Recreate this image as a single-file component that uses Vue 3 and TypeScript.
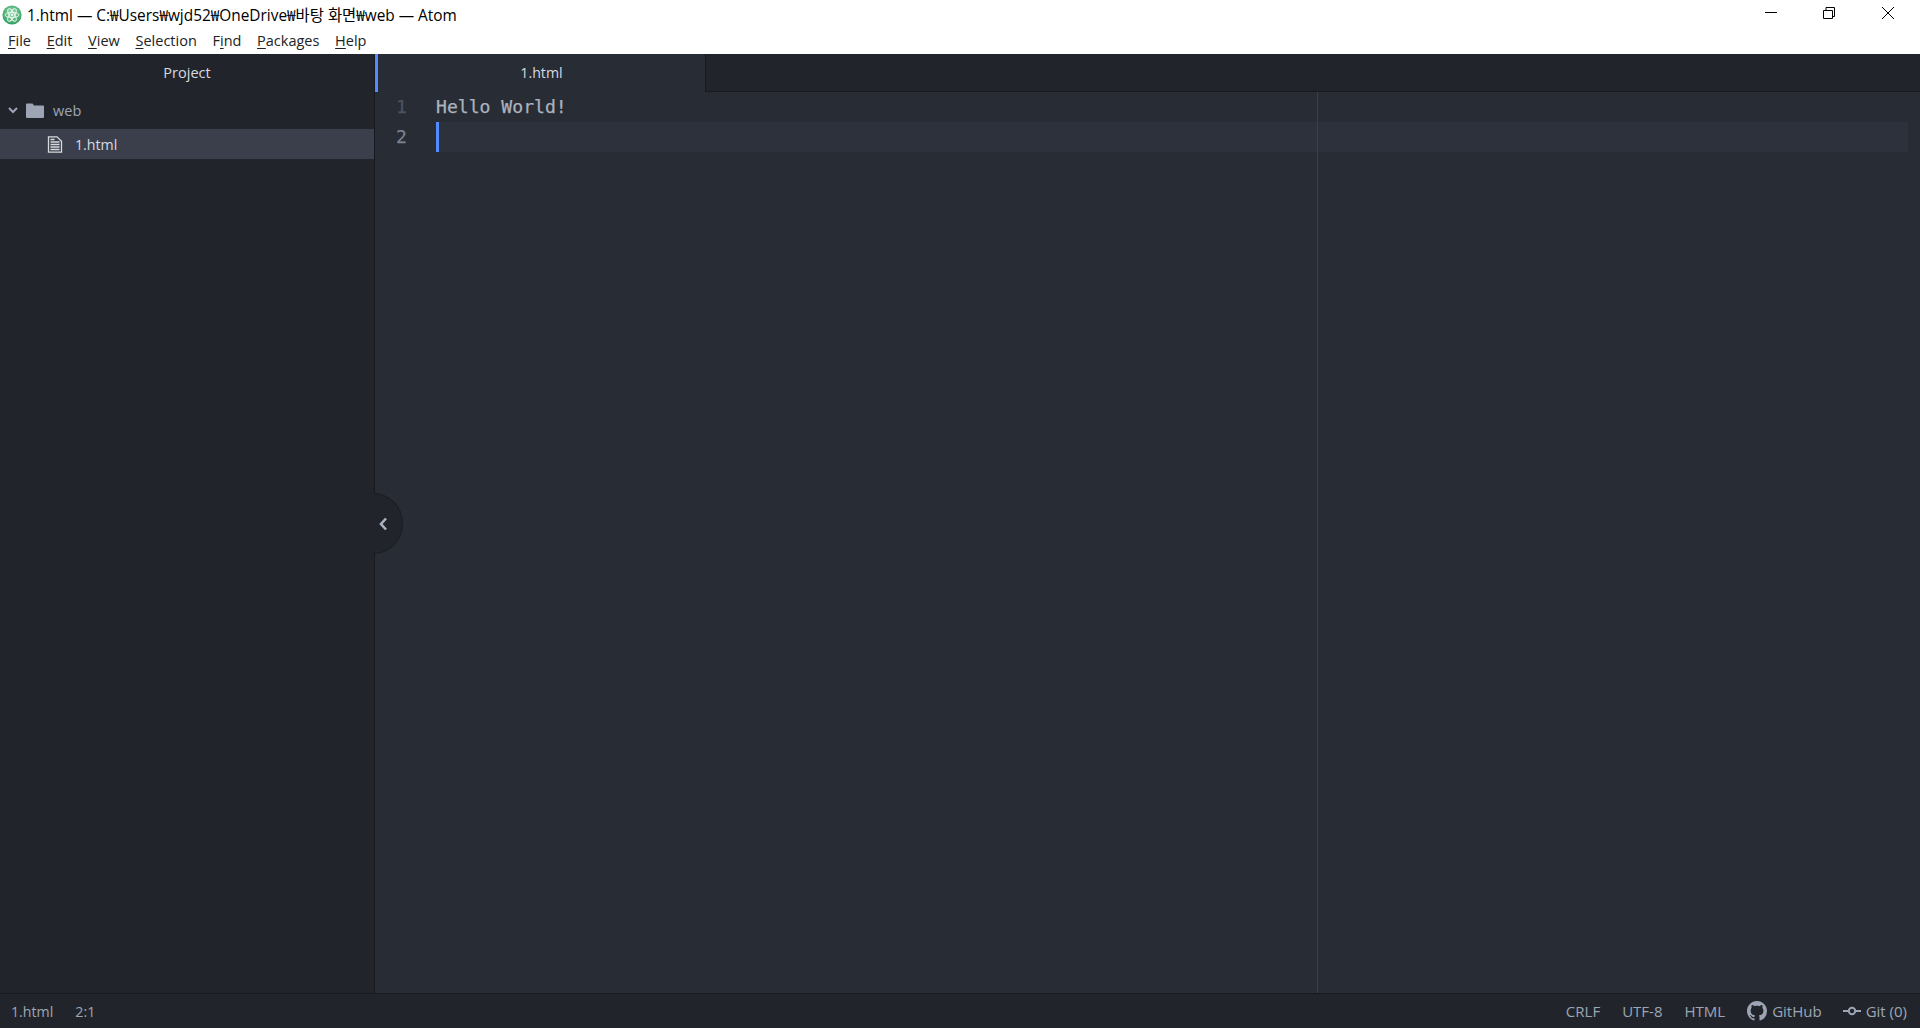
<script setup lang="ts">
const menus: { key: string; rest: string; pre?: string }[] = [
  { key: 'F', rest: 'ile' },
  { key: 'E', rest: 'dit' },
  { key: 'V', rest: 'iew' },
  { key: 'S', rest: 'election' },
  { pre: 'F', key: 'i', rest: 'nd' },
  { key: 'P', rest: 'ackages' },
  { key: 'H', rest: 'elp' },
]
</script>

<template>
  <div class="app">
    <header class="titlebar">
      <svg class="atom" width="20" height="20" viewBox="0 0 20 20">
        <defs>
          <radialGradient id="g" cx="50%" cy="40%" r="60%">
            <stop offset="0" stop-color="#9adcb0" />
            <stop offset="1" stop-color="#2f9e5f" />
          </radialGradient>
        </defs>
        <circle cx="10" cy="10" r="9.6" fill="url(#g)" />
        <g fill="none" stroke="#e8f7ec" stroke-width="0.9">
          <ellipse cx="10" cy="10" rx="7" ry="2.6" transform="rotate(60 10 10)" />
          <ellipse cx="10" cy="10" rx="7" ry="2.6" transform="rotate(-60 10 10)" />
          <ellipse cx="10" cy="10" rx="7" ry="2.6" />
        </g>
        <circle cx="10" cy="10" r="1.2" fill="#e8f7ec" />
      </svg>
      <span class="title">1.html — C:₩Users₩wjd52₩OneDrive₩바탕 화면₩web — Atom</span>
      <div class="controls">
        <div class="ctl">
          <svg width="12" height="12" viewBox="0 0 12 12"><path d="M0 5.500h12" stroke="#000" fill="none" /></svg>
        </div>
        <div class="ctl">
          <svg width="12" height="12" viewBox="0 0 12 12">
            <path d="M0.500 3.500h9v8h-9zM3 3.500v-3h8.500v9h-2" stroke="#000" fill="none" />
          </svg>
        </div>
        <div class="ctl">
          <svg width="12" height="12" viewBox="0 0 12 12"><path d="M0 0l12 12M12 0L0 12" stroke="#000" fill="none" /></svg>
        </div>
      </div>
    </header>

    <nav class="menubar">
      <span v-for="m in menus" :key="m.key + m.rest" class="menu">{{ m.pre }}<u>{{ m.key }}</u>{{ m.rest }}</span>
    </nav>

    <main class="workspace">
      <aside class="sidebar">
        <div class="project-tab">Project</div>
        <div class="tree-root">
          <svg class="chev" width="12" height="12" viewBox="0 0 12 12">
            <path d="M2 4l4 4 4-4" fill="none" stroke="#9da5b4" stroke-width="2" />
          </svg>
          <svg class="folder" width="18" height="15" viewBox="0 0 18 15">
            <path d="M0 1.500q0-1 1-1h5.500l1.500 2h9q1 0 1 1v10.500q0 1-1 1h-16q-1 0-1-1z" fill="#9da5b4" />
          </svg>
          <span>web</span>
        </div>
        <div class="tree-file">
          <svg class="file" width="16" height="17" viewBox="0 0 16 17">
            <path
              d="M1.500 0.800h8.500l4.500 4.500v10.900h-13z M3.500 6h9M3.500 8.500h9M3.500 11h9M3.500 13.500h9M3.500 3.500h4"
              fill="none"
              stroke="#d7dae0"
              stroke-width="1.300"
            />
          </svg>
          <span>1.html</span>
        </div>
      </aside>

      <section class="center">
        <div class="tabbar">
          <div class="tab">1.html</div>
          <div class="tab-rest"></div>
        </div>
        <div class="editor">
          <div class="gutter">
            <div class="ln">1</div>
            <div class="ln active">2</div>
          </div>
          <div class="lines">
            <div class="line">Hello World!</div>
            <div class="line current"><span class="cursor"></span></div>
            <div class="guide"></div>
          </div>
        </div>
        <div class="toggle">
          <svg width="10" height="14" viewBox="0 0 10 14">
            <path d="M8 1.500L3 7l5 5.500" fill="none" stroke="#abb2bf" stroke-width="2.600" />
          </svg>
        </div>
      </section>
    </main>

    <footer class="status">
      <div class="status-left">
        <span>1.html</span>
        <span>2:1</span>
      </div>
      <div class="status-right">
        <span>CRLF</span>
        <span>UTF-8</span>
        <span>HTML</span>
        <span class="iconed gh">
          <svg width="20" height="20" viewBox="0 0 16 16">
            <path
              fill="#9da5b4"
              d="M8 0C3.580 0 0 3.580 0 8c0 3.540 2.290 6.530 5.470 7.590.4.070.55-.17.55-.38 0-.19-.01-.82-.01-1.490-2.010.37-2.530-.49-2.690-.94-.09-.23-.48-.94-.82-1.130-.28-.15-.68-.52-.01-.53.63-.01 1.080.58 1.230.82.72 1.210 1.870.87 2.330.66.070-.52.280-.87.510-1.070-1.780-.2-3.640-.89-3.640-3.950 0-.87.310-1.590.820-2.150-.08-.2-.36-1.020.08-2.120 0 0 .67-.21 2.200.82.640-.18 1.320-.27 2-.27s1.360.09 2 .27c1.530-1.040 2.200-.82 2.200-.82.440 1.100.16 1.920.08 2.120.51.560.82 1.270.82 2.150 0 3.070-1.870 3.750-3.650 3.950.29.250.54.730.54 1.480 0 1.070-.01 1.930-.01 2.200 0 .21.150.46.550.38A8.010 8.010 0 0 0 16 8c0-4.420-3.580-8-8-8z"
            />
          </svg>
          GitHub
        </span>
        <span class="iconed">
          <svg width="18" height="12" viewBox="0 0 18 12">
            <circle cx="9" cy="6" r="3.200" fill="none" stroke="#9da5b4" stroke-width="2" />
            <path d="M0 6h5.500M12.500 6h5.500" stroke="#9da5b4" stroke-width="2" />
          </svg>
          Git (0)
        </span>
      </div>
    </footer>
  </div>
</template>

<style>
html,
body {
  margin: 0;
  padding: 0;
  background: #21252b;
  overflow: hidden;
}
</style>

<style scoped>
.app {
  width: 1920px;
  height: 1028px;
  display: flex;
  flex-direction: column;
  font-family: "Open Sans", "Noto Sans", "Noto Sans CJK KR", sans-serif;
  background: #282c34;
}
.titlebar {
  height: 30px;
  flex: none;
  box-sizing: border-box;
  background: #fff;
  display: flex;
  align-items: center;
  padding: 0 0 1px 2px;
  color: #000;
  font-size: 15.400px;
}
.atom {
  flex: none;
  margin-right: 5px;
}
.title {
  font-family: "Open Sans", "Noto Sans CJK KR", sans-serif;
  white-space: nowrap;
}
.controls {
  margin-left: auto;
  display: flex;
  align-self: stretch;
  padding-right: 3px;
}
.ctl {
  width: 58.500px;
  display: flex;
  align-items: center;
  justify-content: center;
  padding-bottom: 3px;
  box-sizing: border-box;
}
.menubar {
  height: 24px;
  flex: none;
  background: #fff;
  display: flex;
  align-items: center;
  gap: 15.700px;
  padding: 0 0 3px 8px;
  box-sizing: border-box;
  font-size: 14.500px;
  color: #222;
}
.menu u {
  text-underline-offset: 2px;
}
.workspace {
  flex: 1;
  min-height: 0;
  display: flex;
}
.sidebar {
  width: 375px;
  flex: none;
  box-sizing: border-box;
  background: #21252b;
  border-right: 1px solid #181a1f;
  color: #9da5b4;
  font-size: 14.500px;
}
.project-tab {
  height: 38px;
  box-sizing: border-box;
  padding-bottom: 2px;
  display: flex;
  align-items: center;
  justify-content: center;
  color: #d7dae0;
  font-size: 14.500px;
}
.tree-root {
  height: 30px;
  margin: 3px 0 4px;
  display: flex;
  align-items: center;
  padding-left: 7px;
}
.chev {
  margin-right: 7px;
}
.folder {
  margin-right: 9px;
}
.tree-file {
  height: 30px;
  display: flex;
  align-items: center;
  padding-left: 47px;
  background: #3a3f4b;
  color: #d7dae0;
  font-size: 14.200px;
}
.file {
  margin-right: 12px;
}
.center {
  flex: 1;
  min-width: 0;
  display: flex;
  flex-direction: column;
  position: relative;
}
.tabbar {
  height: 38px;
  flex: none;
  display: flex;
  background: #21252b;
}
.tab {
  width: 330px;
  flex: none;
  box-sizing: border-box;
  border-left: 3px solid #528bff;
  padding-bottom: 2px;
  background: #282c34;
  color: #d7dae0;
  display: flex;
  align-items: center;
  justify-content: center;
  font-size: 14.200px;
}
.tab-rest {
  flex: 1;
  border-bottom: 1px solid #181a1f;
  border-left: 1px solid #181a1f;
}
.editor {
  flex: 1;
  min-height: 0;
  display: flex;
  font-family: "DejaVu Sans Mono", monospace;
  font-size: 18.100px;
  line-height: 30px;
  -webkit-text-stroke: 0.25px currentColor;
}
.gutter {
  width: 61px;
  flex: none;
  box-sizing: border-box;
  padding-right: 29px;
  text-align: right;
  color: #4b5363;
}
.ln.active {
  color: #7a8292;
}
.lines {
  flex: 1;
  position: relative;
  color: #abb2bf;
  padding-right: 12px;
}
.line {
  height: 30px;
}
.line.current {
  background: #2c313c;
}
.cursor {
  display: block;
  width: 3px;
  height: 30px;
  background: #528bff;
}
.guide {
  position: absolute;
  left: 881px;
  top: 0;
  bottom: 0;
  width: 1px;
  background: #3a3f49;
}
.toggle {
  position: absolute;
  left: -2px;
  top: 439px;
  width: 30px;
  height: 61px;
  box-sizing: border-box;
  background: #21252b;
  border: 1px solid #1b1e23;
  border-left: none;
  border-radius: 0 31px 31px 0;
  display: flex;
  align-items: center;
  padding-left: 5px;
}
.status {
  height: 35px;
  flex: none;
  box-sizing: border-box;
  border-top: 1px solid #181a1f;
  background: #21252b;
  color: #9da5b4;
  display: flex;
  align-items: center;
  justify-content: space-between;
  padding: 0 13px 0 11px;
  font-size: 14.200px;
}
.status-left {
  display: flex;
  gap: 22px;
}
.status-right {
  display: flex;
  gap: 22px;
  align-items: center;
  font-size: 15px;
}
.iconed {
  display: flex;
  align-items: center;
  gap: 5px;
}
.gh {
  margin-right: -1px;
}
</style>
